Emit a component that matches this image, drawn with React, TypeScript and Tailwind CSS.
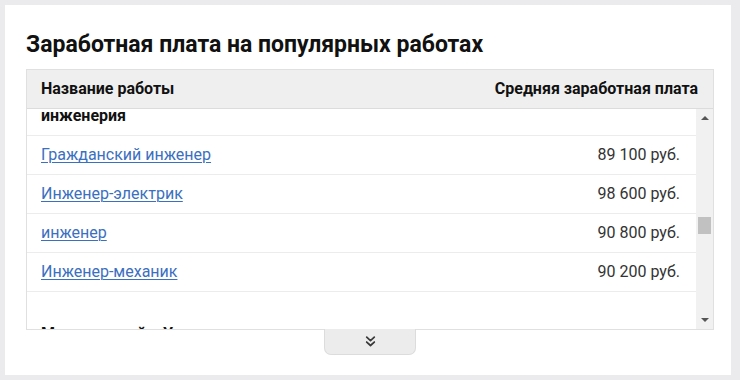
import { useLayoutEffect, useRef } from "react";

type Job = { name: string; salary: string };
type Group = { title: string; jobs: Job[] };

const groups: Group[] = [
  {
    title: "ИТ и технологии",
    jobs: [
      { name: "Программист", salary: "112 400 руб." },
      { name: "Системный администратор", salary: "78 300 руб." },
    ],
  },
  {
    title: "инженерия",
    jobs: [
      { name: "Гражданский инженер", salary: "89 100 руб." },
      { name: "Инженер-электрик", salary: "98 600 руб." },
      { name: "инженер", salary: "90 800 руб." },
      { name: "Инженер-механик", salary: "90 200 руб." },
    ],
  },
  {
    title: "Медицинский и Уход",
    jobs: [
      { name: "Медсестра", salary: "61 500 руб." },
      { name: "Врач", salary: "120 700 руб." },
    ],
  },
];

function ChevronsDown() {
  return (
    <svg width="13" height="13" viewBox="0 0 12 12" fill="none" stroke="#3a3a3a" strokeWidth="1.6" strokeLinecap="round" strokeLinejoin="round">
      <path d="M2.5 2 L6 5.2 L9.5 2" />
      <path d="M2.5 6.5 L6 9.7 L9.5 6.5" />
    </svg>
  );
}

export default function App() {
  const scrollRef = useRef<HTMLDivElement>(null);
  const targetRef = useRef<HTMLDivElement>(null);

  useLayoutEffect(() => {
    if (scrollRef.current && targetRef.current) {
      scrollRef.current.scrollTop = targetRef.current.offsetTop + 12;
    }
  }, []);

  return (
    <div
      className="w-[740px] h-[380px] bg-[#ebebee] pt-[5px] pl-[5px] pr-[9px] pb-[5px]"
      style={{ fontFamily: "Roboto, 'Noto Sans', sans-serif" }}
    >
      <div className="bg-white w-full h-[370px] pl-[21px] pr-[17px] pt-[26px]">
        <h2 className="text-[23px] leading-[28px] font-bold text-[#111] mb-[10px]">
          Заработная плата на популярных работах
        </h2>

        <div className="border border-[#e0e0e0]">
          <div className="h-[39px] bg-[#efefef] border-b border-[#dcdcdc] flex items-center justify-between pl-[14px] pr-[15px] text-[16px] font-bold text-[#111]">
            <span>Название работы</span>
            <span>Средняя заработная плата</span>
          </div>

          <div className="flex h-[220px]">
            <div ref={scrollRef} className="relative flex-1 overflow-hidden">
              {groups.map((g, gi) => (
                <div key={g.title} className={gi > 0 ? "pt-[23px]" : ""}>
                  <div
                    ref={g.title === "инженерия" ? targetRef : undefined}
                    className="h-[39px] flex items-center pl-[14px] text-[16px] font-bold text-[#111] border-b border-[#ececec]"
                  >
                    {g.title}
                  </div>
                  {g.jobs.map((j) => (
                    <div
                      key={j.name}
                      className="h-[39px] flex items-center justify-between pl-[14px] pr-[16px] border-b border-[#ececec] text-[16px]"
                    >
                      <a href="#" className="text-[#3b6fc0] underline underline-offset-2 decoration-1">
                        {j.name}
                      </a>
                      <span className="text-[#333]">{j.salary}</span>
                    </div>
                  ))}
                </div>
              ))}
            </div>

            <div className="w-[17px] bg-[#f1f1f1] flex flex-col items-center justify-between py-[7px]">
              <div className="w-0 h-0 border-l-[4px] border-r-[4px] border-b-[4px] border-l-transparent border-r-transparent border-b-[#555]" />
              <div className="w-[13px] h-[17px] bg-[#c1c1c1] mt-[97px]" />
              <div className="flex-1" />
              <div className="w-0 h-0 border-l-[4px] border-r-[4px] border-t-[4px] border-l-transparent border-r-transparent border-t-[#555]" />
            </div>
          </div>
        </div>

        <div className="flex justify-center">
          <button className="w-[92px] h-[26px] bg-[#ececec] border border-t-0 border-[#dcdcdc] rounded-b-[7px] flex items-center justify-center -mt-[1px]">
            <ChevronsDown />
          </button>
        </div>
      </div>
    </div>
  );
}
